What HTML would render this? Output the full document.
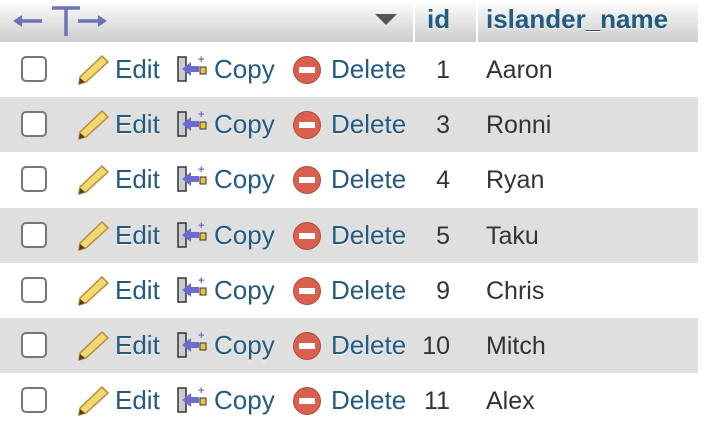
<!DOCTYPE html>
<html><head><meta charset="utf-8"><style>
body{margin:0;width:704px;height:432px;overflow:hidden;background:#fff;font-family:"Liberation Sans",sans-serif;}
.hdr{position:absolute;top:0;height:42px;background:linear-gradient(#fff,#ccc);}
.row{position:absolute;left:0;width:698px;height:55px;}
.g{background:#dfdfdf;}
.t{position:absolute;font-size:26px;color:#235a81;text-shadow:0 1px 0 #fff;}
.d{position:absolute;font-size:25px;color:#333;}
.cb{position:absolute;left:21px;width:26px;height:26px;border:2px solid #767676;border-radius:5px;background:#fff;box-sizing:border-box;}
</style></head><body>
<div class="hdr" style="left:0;width:413px"></div>
<div class="hdr" style="left:415px;width:61px"></div>
<div class="hdr" style="left:478px;width:220px"></div>
<svg style="position:absolute;left:12px;top:3px" width="96" height="34"><g fill="#6c73b8" stroke="#6c73b8" stroke-width="3.5"><line x1="6" y1="18" x2="30" y2="18"/><polygon points="1,18 10,12 10,24" stroke="none"/><line x1="40" y1="5" x2="68" y2="5"/><line x1="54" y1="5" x2="54" y2="33"/><line x1="66" y1="18" x2="90" y2="18"/><polygon points="95,18 86,12 86,24" stroke="none"/></g></svg>
<svg style="position:absolute;left:374px;top:13px" width="24" height="14"><polygon points="1,1 23,1 12,12" fill="#555"/></svg>
<div class="t" style="left:427px;top:4px;font-weight:bold">id</div>
<div class="t" style="left:486px;top:4px;font-weight:bold">islander_name</div>
<div id="rows"></div>
<script>
var data=[[1,"Aaron"],[3,"Ronni"],[4,"Ryan"],[5,"Taku"],[9,"Chris"],[10,"Mitch"],[11,"Alex"]];
var h="";
data.forEach(function(r,i){
var y=42+i*55.2;
h+='<div class="row'+(i%2?' g':'')+'" style="top:'+y+'px">'+
'<div class="cb" style="top:14px"></div>'+
'<svg style="position:absolute;left:76px;top:12px" width="34" height="32"><polygon points="26,2 32,8 10,28 3,30 4,23" fill="#f2d870" stroke="#b98a3a" stroke-width="1.5"/><polygon points="3,30 4,24 9,28" fill="#5a3a1a"/></svg>'+
'<div class="t" style="left:115px;top:12px">Edit</div>'+
'<svg style="position:absolute;left:176px;top:12px" width="32" height="30"><rect x="2" y="3" width="8" height="24" fill="#ccc" stroke="#333" stroke-width="1.5"/><polygon points="6,15 15,8 15,12 23,12 23,18 15,18 15,22" fill="#6c6cd0"/><rect x="24" y="13" width="6" height="7" fill="#f0c040" stroke="#333" stroke-width="1"/><text x="22" y="9" font-size="11" font-weight="bold" fill="#6c6cd0">+</text></svg>'+
'<div class="t" style="left:214px;top:12px">Copy</div>'+
'<svg style="position:absolute;left:292px;top:13px" width="30" height="30"><circle cx="15" cy="15" r="13.5" fill="#d9604e" stroke="#b04a3a"/><rect x="7" y="12" width="16" height="6" fill="#fff"/></svg>'+
'<div class="t" style="left:331px;top:12px">Delete</div>'+
'<div class="d" style="right:'+(698-450)+'px;top:14px">'+r[0]+'</div>'+
'<div class="d" style="left:486px;top:14px">'+r[1]+'</div></div>';
});
document.getElementById("rows").innerHTML=h;
</script>
</body></html>
